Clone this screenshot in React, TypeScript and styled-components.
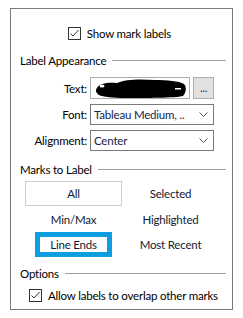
import React from "react";
import styled, { createGlobalStyle } from "styled-components";

const GlobalStyle = createGlobalStyle`
    body {
        margin: 0;
        background: #ffffff;
        font-family: Lato, "Noto Sans", "Liberation Sans", sans-serif;
        font-size: 11.5px;
        letter-spacing: -0.2px;
        color: #000000;
    }
`

const Panel = styled.div`
    box-sizing: border-box;
    margin: 8px 0 0 10px;
    width: 223px;
    height: 302px;
    border: 1px solid #7a7a7a;
    padding: 15px 6px 0 9px;
    display: flex;
    flex-direction: column;
`

const CheckRow = styled.label<{ $center?: boolean }>`
    display: flex;
    align-items: center;
    justify-content: ${p => p.$center ? "center" : "flex-start"};
    padding: ${p => p.$center ? "0 7px 0 0" : "0 0 0 9px"};
    gap: 6px;
    height: 18px;
    margin-top: ${p => p.$center ? "0" : "5px"};
    white-space: nowrap;
`

const Box = styled.span`
    box-sizing: border-box;
    width: 13px;
    height: 13px;
    border: 1px solid #333333;
    background: #ffffff;
    display: flex;
    align-items: center;
    justify-content: center;
`

const Header = styled.div<{ $top: number }>`
    display: flex;
    align-items: center;
    gap: 6px;
    height: 16px;
    margin-top: ${p => p.$top}px;
    white-space: nowrap;
    &::after {
        content: "";
        flex: 1;
        height: 1px;
        background: #a0a0a0;
    }
`

const Field = styled.div<{ $top: number }>`
    display: grid;
    grid-template-columns: 67px 124px;
    column-gap: 3px;
    align-items: center;
    margin-top: ${p => p.$top}px;
`

const FieldLabel = styled.span`
    text-align: right;
`

const TextInput = styled.div`
    display: flex;
    gap: 3px;
    height: 22px;
`

const Input = styled.div`
    box-sizing: border-box;
    width: 100px;
    height: 22px;
    border: 1px solid #adadad;
    background: #ffffff;
    padding: 1px 2px 1px 4px;
`

const DotsButton = styled.div`
    box-sizing: border-box;
    width: 21px;
    height: 22px;
    border: 1px solid #adadad;
    background: #e1e1e1;
    display: flex;
    align-items: center;
    justify-content: center;
    font-size: 11px;
    line-height: 1;
    padding-bottom: 2px;
    color: #1c2b4a;
`

const Select = styled.div`
    box-sizing: border-box;
    height: 21px;
    border: 1px solid #7a7a7a;
    background: #ffffff;
    display: flex;
    align-items: center;
    justify-content: space-between;
    padding: 0 5px 0 3px;
    color: #13254a;
    white-space: nowrap;
`

const MarksGrid = styled.div`
    display: grid;
    grid-template-columns: 97px 97px;
    grid-auto-rows: 25.5px;
    margin: 4px 0 0 5px;
`

const MarkOption = styled.div<{ $variant?: "boxed" | "focused" }>`
    box-sizing: border-box;
    display: flex;
    align-items: center;
    justify-content: center;
    justify-self: center;
    height: ${p => p.$variant ? "25px" : "100%"};
    width: ${p => p.$variant === "focused" ? "77px" : "97px"};
    border: ${p => p.$variant === "boxed" ? "1px solid #cccccc"
        : p.$variant === "focused" ? "5px solid #0c9ee0" : "none"};
    color: #0f1a33;
`

function Check() {
    return <Box>
        <svg width="11" height="11" viewBox="0 0 11 11">
            <polyline points="1.5,5.5 4,8 9.5,2" fill="none" stroke="#333" strokeWidth="1" />
        </svg>
    </Box>
}

function Chevron() {
    return <svg width="9" height="5" viewBox="0 0 9 5">
        <polyline points="0.5,0.5 4.5,4.5 8.5,0.5" fill="none" stroke="#555" strokeWidth="1" />
    </svg>
}

function Redacted() {
    return <svg width="92" height="20" viewBox="0 0 92 20">
        <path d="M2,9 C4,4 14,3 22,4 C30,0 46,0 60,1 C72,1 84,2 89,5 C92,8 91,14 88,17 C80,19 50,19 30,19 C18,19 8,18 4,16 C1,14 0,11 2,9 Z" fill="#000" />
        <ellipse cx="7" cy="7" rx="2.5" ry="1.5" fill="#fff" />
        <rect x="80" y="9" width="6" height="1.5" fill="#fff" />
    </svg>
}

export default function App() {
    return <>
        <GlobalStyle />
        <Panel>
            <CheckRow $center><Check />Show mark labels</CheckRow>

            <Header $top={10}>Label Appearance</Header>
            <Field $top={9}>
                <FieldLabel>Text:</FieldLabel>
                <TextInput>
                    <Input><Redacted /></Input>
                    <DotsButton>...</DotsButton>
                </TextInput>
            </Field>
            <Field $top={5}>
                <FieldLabel>Font:</FieldLabel>
                <Select>Tableau Medium, ..<Chevron /></Select>
            </Field>
            <Field $top={5}>
                <FieldLabel>Alignment:</FieldLabel>
                <Select>Center<Chevron /></Select>
            </Field>

            <Header $top={10}>Marks to Label</Header>
            <MarksGrid>
                <MarkOption $variant="boxed">All</MarkOption>
                <MarkOption>Selected</MarkOption>
                <MarkOption>Min/Max</MarkOption>
                <MarkOption>Highlighted</MarkOption>
                <MarkOption $variant="focused">Line Ends</MarkOption>
                <MarkOption>Most Recent</MarkOption>
            </MarksGrid>

            <Header $top={8}>Options</Header>
            <CheckRow><Check />Allow labels to overlap other marks</CheckRow>
        </Panel>
    </>
}
